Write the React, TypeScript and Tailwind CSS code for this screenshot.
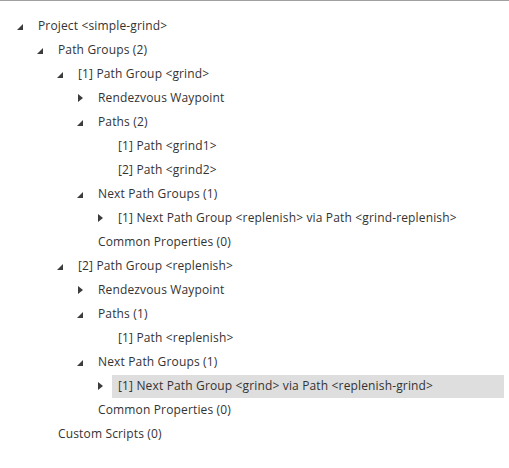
type Node = {
  label: string;
  level: number;
  arrow?: "open" | "closed";
  selected?: boolean;
};

const rows: Node[] = [
  { label: "Project <simple-grind>", level: 0, arrow: "open" },
  { label: "Path Groups (2)", level: 1, arrow: "open" },
  { label: "[1] Path Group <grind>", level: 2, arrow: "open" },
  { label: "Rendezvous Waypoint", level: 3, arrow: "closed" },
  { label: "Paths (2)", level: 3, arrow: "open" },
  { label: "[1] Path <grind1>", level: 4 },
  { label: "[2] Path <grind2>", level: 4 },
  { label: "Next Path Groups (1)", level: 3, arrow: "open" },
  { label: "[1] Next Path Group <replenish> via Path <grind-replenish>", level: 4, arrow: "closed" },
  { label: "Common Properties (0)", level: 3 },
  { label: "[2] Path Group <replenish>", level: 2, arrow: "open" },
  { label: "Rendezvous Waypoint", level: 3, arrow: "closed" },
  { label: "Paths (1)", level: 3, arrow: "open" },
  { label: "[1] Path <replenish>", level: 4 },
  { label: "Next Path Groups (1)", level: 3, arrow: "open" },
  { label: "[1] Next Path Group <grind> via Path <replenish-grind>", level: 4, arrow: "closed", selected: true },
  { label: "Common Properties (0)", level: 3 },
  { label: "Custom Scripts (0)", level: 1 },
];

function Arrow({ kind }: { kind?: "open" | "closed" }) {
  if (kind === "open")
    return (
      <svg width="6" height="6" viewBox="0 0 6 6" className="ml-[1px] mt-[2px]">
        <polygon points="6,0 6,6 0,6" fill="#3c3c3c" />
      </svg>
    );
  if (kind === "closed")
    return (
      <svg width="5" height="8" viewBox="0 0 5 8" className="ml-[2px]">
        <polygon points="0,0 5,4 0,8" fill="#3c3c3c" />
      </svg>
    );
  return null;
}

export default function App() {
  return (
    <div className="w-[509px] h-[468px] bg-white border-t border-[#a0a0a0] pt-[13px] pr-[5px] text-[12px] tracking-[0.15px] text-[#333] font-['Segoe_UI','Open_Sans',sans-serif]">
      {rows.map((r, i) => (
        <div key={i} className="flex items-center h-6" style={{ paddingLeft: 16 + r.level * 20 }}>
          <div className="w-4 shrink-0 flex items-center">
            <Arrow kind={r.arrow} />
          </div>
          <div
            className={
              r.selected
                ? "flex-1 h-[23px] flex items-center px-[6px] bg-[#dedede] whitespace-nowrap"
                : "px-[6px] whitespace-nowrap"
            }
          >
            {r.label}
          </div>
        </div>
      ))}
    </div>
  );
}
